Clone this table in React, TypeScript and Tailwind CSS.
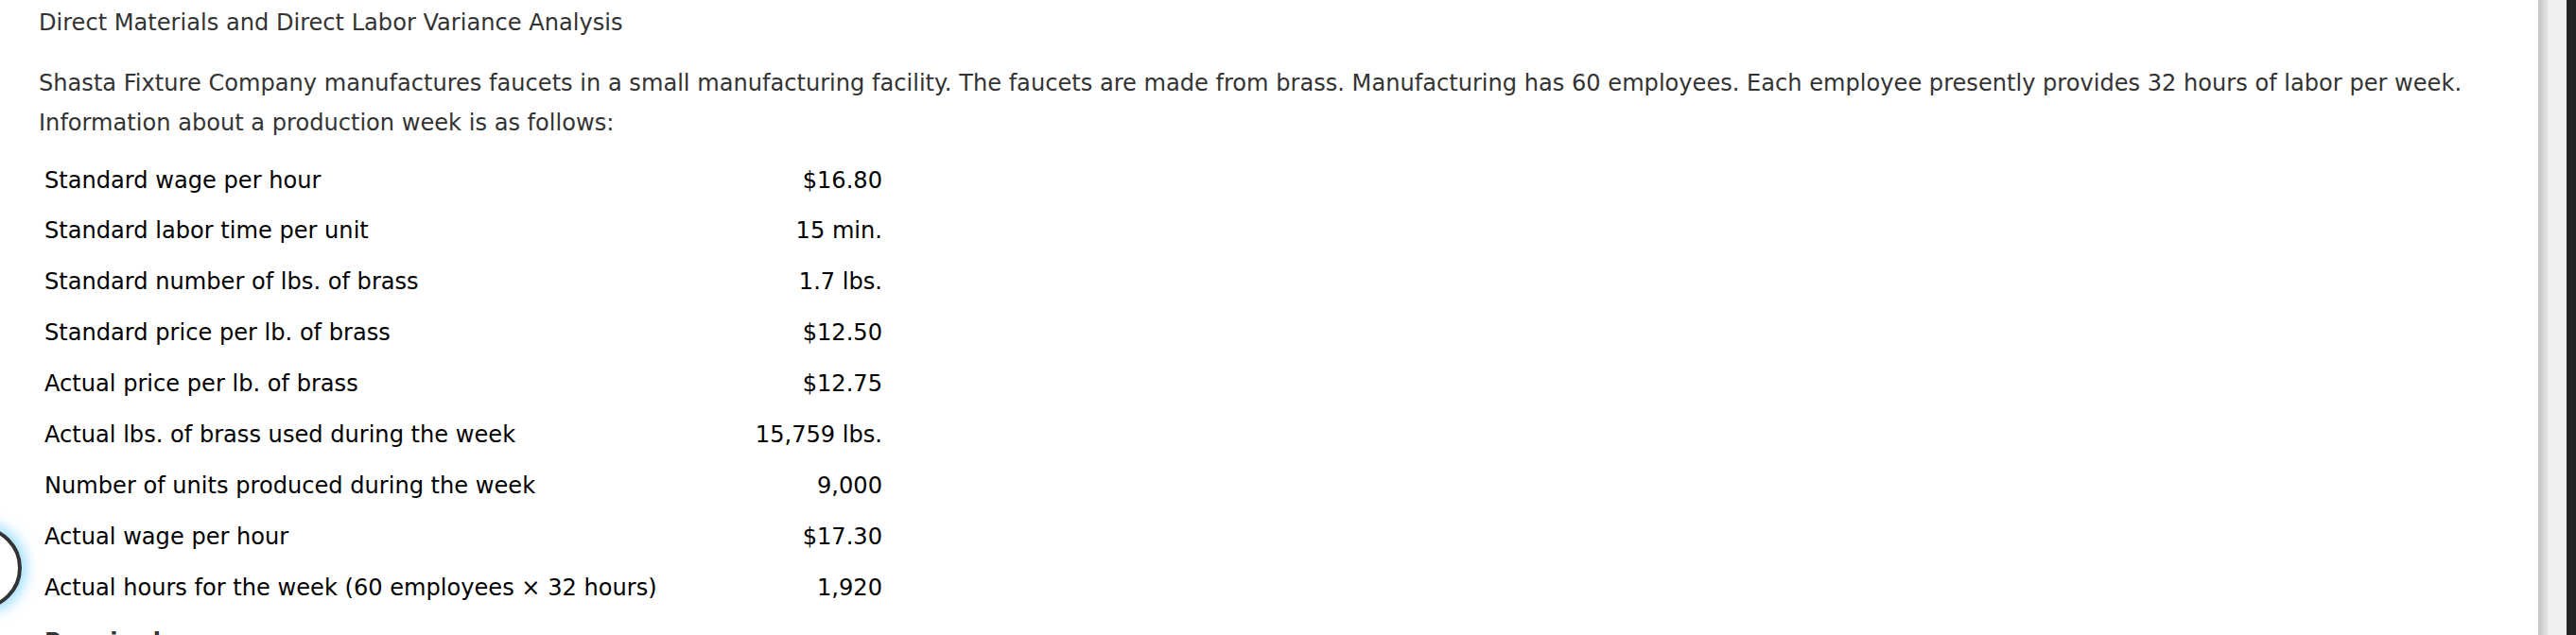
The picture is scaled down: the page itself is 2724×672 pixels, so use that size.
const rows: [string, string][] = [
  ["Standard wage per hour", "$16.80"],
  ["Standard labor time per unit", "15 min."],
  ["Standard number of lbs. of brass", "1.7 lbs."],
  ["Standard price per lb. of brass", "$12.50"],
  ["Actual price per lb. of brass", "$12.75"],
  ["Actual lbs. of brass used during the week", "15,759 lbs."],
  ["Number of units produced during the week", "9,000"],
  ["Actual wage per hour", "$17.30"],
  ["Actual hours for the week (60 employees \u00d7 32 hours)", "1,920"],
];

export default function App() {
  return (
    <div className="flex h-[672px] w-[2724px] overflow-hidden bg-white font-['DejaVu_Sans',Verdana,sans-serif] text-[24.1px]">
      <main className="relative flex-1 pl-[41px] pt-[2.5px]">
        {/* floating help button, mostly off-screen */}
        <div className="absolute left-[-65px] top-[557px] h-[88px] w-[88px] rounded-full border-[4px] border-[#333] bg-white shadow-[0_0_14px_5px_rgba(125,211,252,0.75)]" />

        <h1 className="leading-[42px] text-[#333]">Direct Materials and Direct Labor Variance Analysis</h1>

        <p className="mt-[22px] leading-[42px] text-[#333]">
          Shasta Fixture Company manufactures faucets in a small manufacturing facility. The faucets are made from brass.
          Manufacturing has 60 employees. Each employee presently provides 32 hours of labor per week.
          <br />
          Information about a production week is as follows:
        </p>

        <div className="mt-[14px] w-[892px] pl-[6px] text-black">
          {rows.map(([label, value]) => (
            <div key={label} className="flex h-[53.9px] items-center justify-between leading-[53.9px]">
              <span>{label}</span>
              <span className="text-right">{value}</span>
            </div>
          ))}
        </div>

        <h2 className="mt-[8px] pl-[6px] font-bold leading-[42px] text-[#333]">Required:</h2>
      </main>

      <div className="w-[10px] bg-gradient-to-r from-[#c4c4c4] to-[#e4e4e4]" />
      <div className="w-[20px] bg-[#efefef]" />
      <div className="w-[10px] bg-[#232323]" />
    </div>
  );
}
